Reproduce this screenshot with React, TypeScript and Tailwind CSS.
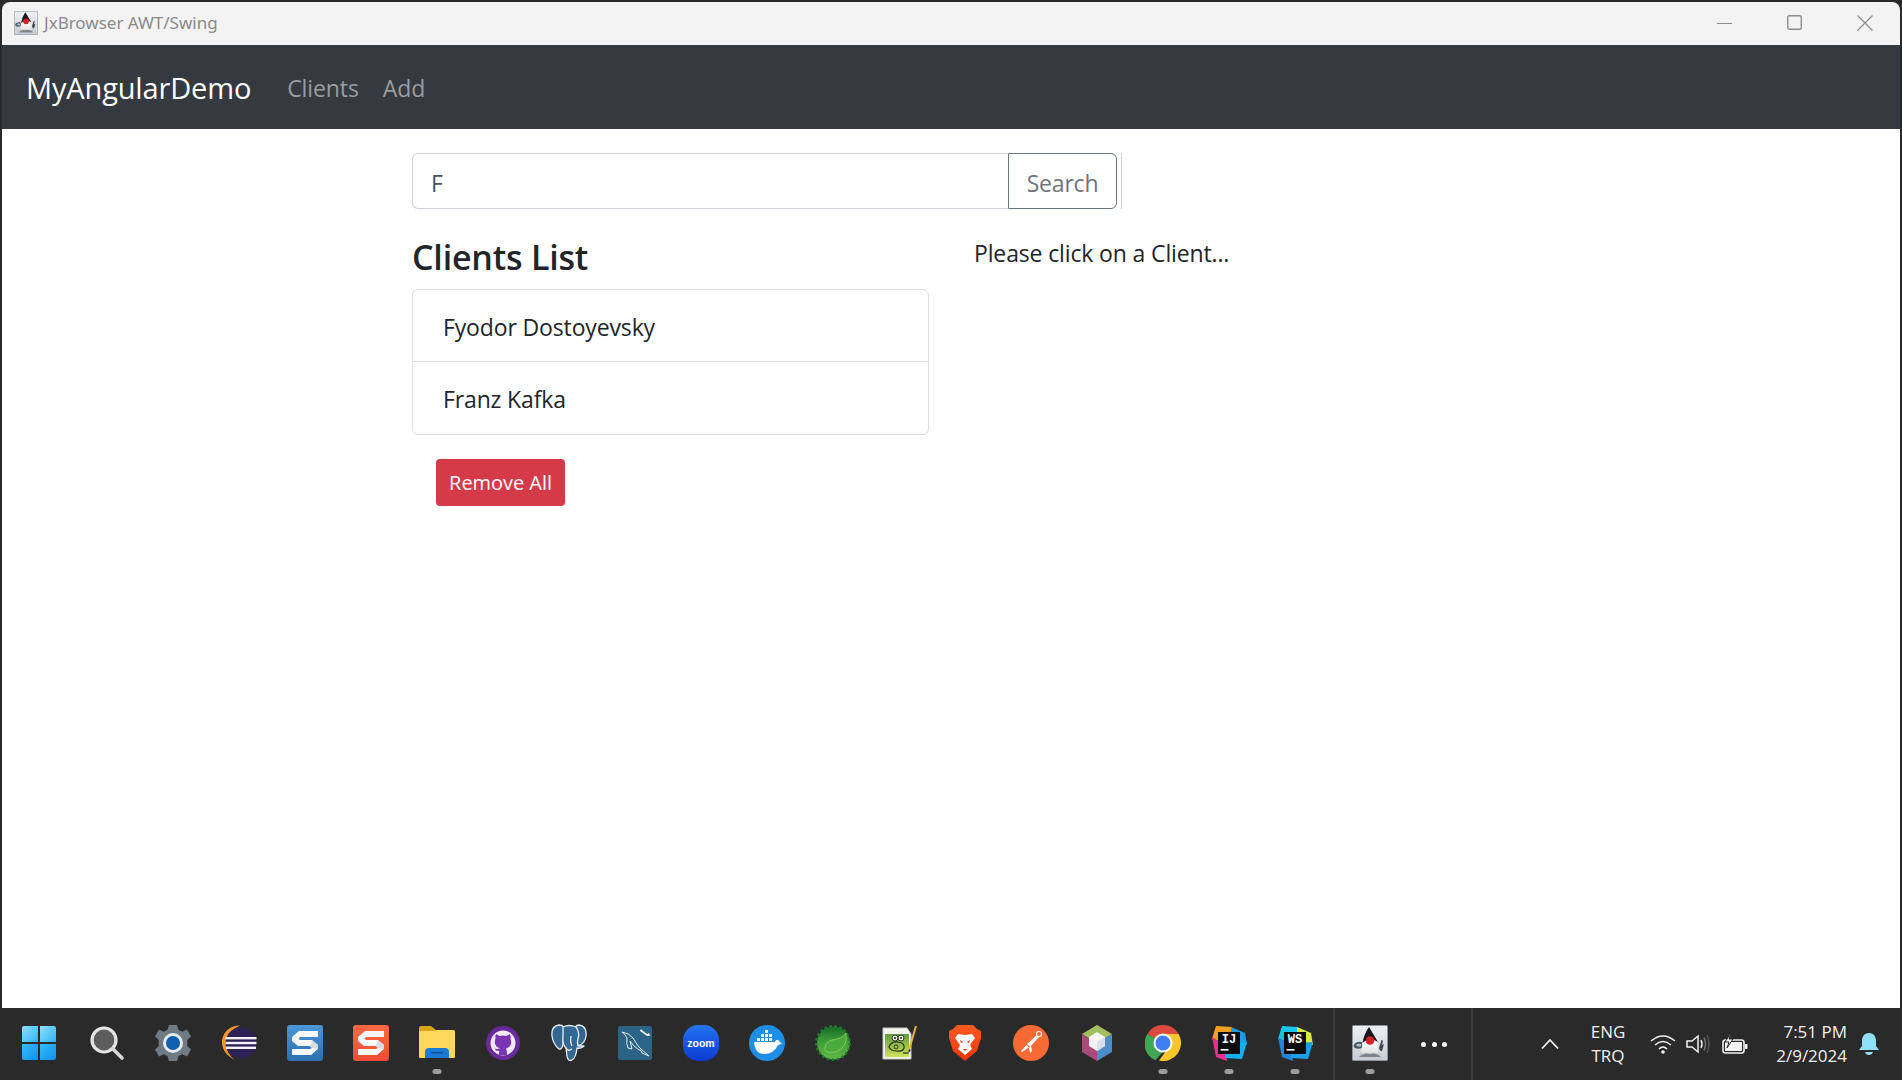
import React from "react";

const F = "font-['Open_Sans','Noto_Sans',sans-serif]";

const Duke = ({ s, id }: { s: number; id: string }) => (
  <svg width={s} height={s} viewBox="0 0 36 36">
    <defs>
      <linearGradient id={id} x1="0" y1="0" x2="0" y2="1">
        <stop offset="0" stopColor="#eef1f4" />
        <stop offset="1" stopColor="#c8ccd2" />
      </linearGradient>
      <linearGradient id={`${id}b`} x1="0" y1="0" x2="0" y2="1">
        <stop offset="0" stopColor="#ffffff" />
        <stop offset=".7" stopColor="#e4e4e4" />
        <stop offset="1" stopColor="#8d9198" />
      </linearGradient>
    </defs>
    <rect x=".5" y=".5" width="35" height="35" rx="1" fill={`url(#${id})`} stroke="#8a95a3" />
    <path d="M11 17 Q10 24 9 28 Q8 31 7 32 L29 32 Q27 30 26.500 27 Q26 22 25 16Z" fill={`url(#${id}b)`} />
    <path d="M17 2 L26 17 Q18 11 10.500 18 Q12 9 17 2Z" fill="#17171c" />
    <circle cx="18" cy="15.500" r="4.300" fill="#d61f2b" />
    <path d="M10 17 Q3 16 1.500 21 Q3 25 10 23Z" fill="#4a5866" />
    <path d="M4 20 Q5 18 9 19 L9 21.500 Q5 22 4 20Z" fill="#b6c2cd" />
    <path d="M27 23 L29.500 15 L31 15.500 L30 20 L32 19 L30 26 Q28 27 27 23Z" fill="#3f464f" />
    <path d="M8 32 Q12 27 18 29 Q24 27 28 32Z" fill="#7f848b" />
  </svg>
);

const Win = () => (
  <svg width="36" height="36" viewBox="0 0 36 36">
    <defs>
      <linearGradient id="w1" x1="0" y1="0" x2="1" y2="1"><stop offset="0" stopColor="#8fe0ff" /><stop offset="1" stopColor="#2cb4f5" /></linearGradient>
      <linearGradient id="w2" x1="0" y1="0" x2="1" y2="1"><stop offset="0" stopColor="#35bdf8" /><stop offset="1" stopColor="#0f8fee" /></linearGradient>
    </defs>
    <path d="M1 3a2 2 0 0 1 2-2h14v16H1z" fill="url(#w1)" />
    <path d="M19 1h14a2 2 0 0 1 2 2v14H19z" fill="url(#w1)" />
    <path d="M1 19h16v16H3a2 2 0 0 1-2-2z" fill="url(#w2)" />
    <path d="M19 19h16v14a2 2 0 0 1-2 2H19z" fill="url(#w2)" />
  </svg>
);

const SearchI = () => (
  <svg width="36" height="36" viewBox="0 0 36 36">
    <circle cx="15" cy="15" r="12" fill="#5c5c5c" stroke="#e4e4e4" strokeWidth="3.2" />
    <path d="M24 24 L33 33" stroke="#d8d8d8" strokeWidth="3.6" strokeLinecap="round" />
  </svg>
);

const Gear = () => (
  <svg width="38" height="38" viewBox="0 0 38 38">
    <path
      d="M15 1h8l1.500 5 3.800 1.800L33 5.500l4 7-3.700 3.400v6.200l3.700 3.400-4 7-4.700-2.300-3.800 1.800L23 37h-8l-1.500-5-3.800-1.800L5 32.500l-4-7 3.700-3.400v-6.200L1 12.500l4-7 4.700 2.300L13.500 6z"
      fill="#6f7a85"
    />
    <circle cx="19" cy="19" r="10" fill="#e6edf2" />
    <circle cx="19" cy="19" r="7" fill="#0f5fb0" />
  </svg>
);

const Eclipse = () => (
  <svg width="36" height="36" viewBox="0 0 36 36">
    <path d="M19 0.500 Q4 1 1 15 Q0 28 14 35 Q6 30 5 18 Q6 6 19 0.500Z" fill="#f5962c" />
    <circle cx="20" cy="18" r="15.500" fill="#2c2255" />
    <rect x="4.500" y="12" width="31" height="2.400" fill="#f4f2fa" />
    <rect x="4.500" y="16.800" width="31" height="2.400" fill="#f4f2fa" />
    <rect x="5" y="21.600" width="30" height="2.400" fill="#f4f2fa" />
  </svg>
);

const Snag = ({ a, b, id }: { a: string; b: string; id: string }) => (
  <svg width="36" height="36" viewBox="0 0 36 36">
    <defs>
      <linearGradient id={id} x1="0" y1="0" x2="0" y2="1"><stop offset="0" stopColor={b} /><stop offset="1" stopColor={a} /></linearGradient>
    </defs>
    <rect width="36" height="36" rx="3" fill={`url(#${id})`} />
    <path d="M31 6 H12 L5 12 V16 L11 21 H23 L25 23 L23 24 H5 V30 H24 L31 24 V20 L25 15 H13 L11.500 13.500 L13 12 H31Z" fill="#f6f8fa" />
    <path d="M25 15 L31 20 V24 L25 23 L23 21Z" fill="#d5dde4" />
  </svg>
);

const Folder = () => (
  <svg width="36" height="36" viewBox="0 0 36 36">
    <path d="M0 3a2 2 0 0 1 2-2h10l5 4h17a2 2 0 0 1 2 2v4H0z" fill="#d7a514" />
    <path d="M0 6h15l4-1h15a2 2 0 0 1 2 2v25a1 1 0 0 1-1 1H1a1 1 0 0 1-1-1z" fill="#ffd75a" />
    <path d="M6 33V27a4 4 0 0 1 4-4h16a4 4 0 0 1 4 4v6z" fill="#1d7ad2" />
    <rect x="12" y="27" width="12" height="1.500" fill="#0c4f95" />
  </svg>
);

const GitHub = () => (
  <svg width="34" height="34" viewBox="0 0 34 34">
    <circle cx="17" cy="17" r="17" fill="#6a2a9c" />
    <circle cx="17" cy="17" r="12.500" fill="#f1e8f8" />
    <path d="M10 8 L13.500 10 Q17 9 20.500 10 L24 8 Q25 11 24.500 13 Q26 16 24.500 19 Q23 22 20 22.500 Q21 24 21 29 L13 29 Q13 26 13.300 25 Q10 25.500 8.500 22.500 Q11 23.500 13.800 22.300 Q10.500 21.500 9.500 19 Q8 16 9.500 13 Q9 11 10 8Z" fill="#7b35b4" />
  </svg>
);

const Pg = () => (
  <svg width="36" height="38" viewBox="0 0 36 38" fill="#336791" stroke="#e8eef3" strokeWidth="1.300" strokeLinejoin="round">
    <path d="M8 1 Q0 2 1 12 Q2 20 8 25 Q11 26 12 20 L13 3 Q11 1 8 1Z" />
    <path d="M28 1 Q36 2 35 12 Q34 19 29 21 Q26 22 25 19 L24 3 Q26 1 28 1Z" />
    <path d="M12 3 Q18 0 25 3 Q29 8 27 15 Q26 19 27 22 L33 22 Q30 25 26 24 Q25 34 21 36 Q17 38 16 32 L15 24 Q11 20 12 12Z" />
    <path d="M15 24 Q17 28 21 25" fill="none" />
    <path d="M20 12 Q19 18 21 22" fill="none" />
  </svg>
);

const Mysql = () => (
  <svg width="34" height="34" viewBox="0 0 34 34">
    <rect width="34" height="34" rx="2" fill="#2c6488" />
    <path d="M4 6 Q11 7 15 12 Q18 17 21 21 Q25 25 31 30 L24 27 Q23 23 21 24 Q15 20 12 15 L14 23 L10 22 Q8 18 9 12 Q7 8 4 6Z" fill="none" stroke="#e3edf4" strokeWidth="1" strokeLinejoin="round" />
    <path d="M23 3 L25 5 L29 8 L31 7 L32 10 L29 10 L25 7 L22 5Z" fill="#f0f4f7" />
  </svg>
);

const Zoom = () => (
  <svg width="36" height="36" viewBox="0 0 36 36">
    <defs>
      <linearGradient id="zm" x1="0" y1="0" x2="0" y2="1"><stop offset="0" stopColor="#2573f2" /><stop offset="1" stopColor="#0b3ad0" /></linearGradient>
    </defs>
    <rect width="36" height="36" rx="15" fill="url(#zm)" />
    <text x="18" y="21.500" textAnchor="middle" fontSize="10.500" fontWeight="700" fill="#fff" fontFamily="Liberation Sans, sans-serif">zoom</text>
  </svg>
);

const Docker = () => (
  <svg width="36" height="36" viewBox="0 0 36 36">
    <circle cx="18" cy="18" r="18" fill="#1f8fe6" />
    <path d="M5 17 H26 Q27 14 29 15 Q31 16 31 17.500 Q33 17.500 33 18 Q31 20 29 20 Q25 29 15 29 Q6 29 5 17Z" fill="#fff" />
    <g fill="#fff">
      <rect x="8" y="13" width="3" height="3" /><rect x="12" y="13" width="3" height="3" /><rect x="16" y="13" width="3" height="3" /><rect x="20" y="13" width="3" height="3" />
      <rect x="12" y="9" width="3" height="3" /><rect x="16" y="9" width="3" height="3" /><rect x="20" y="9" width="3" height="3" /><rect x="16" y="5" width="3" height="3" />
    </g>
  </svg>
);

const Spring = () => (
  <svg width="36" height="36" viewBox="0 0 36 36">
    <defs>
      <linearGradient id="sp" x1="0" y1="0" x2="0" y2="1"><stop offset="0" stopColor="#176a2a" /><stop offset=".45" stopColor="#3f9f38" /><stop offset="1" stopColor="#5fb847" /></linearGradient>
    </defs>
    <circle cx="18.500" cy="18" r="16.500" fill="url(#sp)" />
    <circle cx="18" cy="18" r="16.800" fill="none" stroke="#1f7a2e" strokeWidth="2.400" strokeDasharray="2.500 2.500" />
    <path d="M31 8 Q33 21 23 26 Q15 29 10 25.500 Q9 17 17 15 Q27 14 31 8Z" fill="#4aaa3c" stroke="#8ed268" strokeWidth=".8" />
  </svg>
);

const Npp = () => (
  <svg width="36" height="36" viewBox="0 0 36 36">
    <defs>
      <linearGradient id="np" x1="0" y1="0" x2="0" y2="1"><stop offset="0" stopColor="#5f9e3c" /><stop offset="1" stopColor="#d2e05a" /></linearGradient>
    </defs>
    <path d="M2 3 H26 L30 9 V34 H2Z" fill="#f5f7ef" stroke="#c5c9c1" />
    <path d="M4 9 H28 V32 H4Z" fill="url(#np)" />
    <circle cx="14" cy="13" r="3" fill="#eef2e0" stroke="#2e3a1a" />
    <circle cx="20" cy="13" r="3" fill="#eef2e0" stroke="#2e3a1a" />
    <circle cx="14" cy="13" r="1" fill="#222" /><circle cx="20" cy="13" r="1" fill="#222" />
    <path d="M8 22 Q10 16 17 17 Q24 18 23 23 Q22 27 15 26 Q10 26 8 22Z" fill="none" stroke="#2e3a1a" strokeWidth="1.200" />
    <circle cx="15" cy="22" r="2" fill="none" stroke="#2e3a1a" />
    <path d="M22 28 H27" stroke="#2e3a1a" strokeWidth="1.200" />
    <path d="M28 25 L35 1" stroke="#e4b43c" strokeWidth="2" />
    <path d="M27 29 L28 24 L30 25Z" fill="#333" />
  </svg>
);

const Brave = () => (
  <svg width="34" height="36" viewBox="0 0 34 36">
    <defs>
      <linearGradient id="br" x1="0" y1="0" x2="0" y2="1"><stop offset="0" stopColor="#ff5a1f" /><stop offset="1" stopColor="#f2350a" /></linearGradient>
    </defs>
    <path d="M9 0 H25 L29 4 L33 6 L33 13 L29 26 L17 36 L5 26 L1 13 L1 6 L5 4Z" fill="url(#br)" />
    <path d="M10 9 L17 10 L24 9 L27 13 L22 20 L24 24 L17 30 L10 24 L12 20 L7 13Z" fill="#fff" />
    <path d="M12 15 L15 17 L13 18Z M22 15 L19 17 L21 18Z M15 24 H19 L17 26Z" fill="#f2350a" />
  </svg>
);

const Postman = () => (
  <svg width="36" height="36" viewBox="0 0 36 36">
    <circle cx="18" cy="18" r="18" fill="#f76935" />
    <circle cx="26" cy="9" r="2.500" fill="none" stroke="#fff" strokeWidth="1.200" />
    <path d="M24 10 L26 12 L17 22 L14 19Z" fill="#fff" />
    <path d="M13.500 20 L16 22.500 L9 27 L8 26Z" fill="#fff" />
    <path d="M16 23 L17 28 L19 26 L18 21Z" fill="#fff" />
  </svg>
);

const Nb = () => (
  <svg width="34" height="36" viewBox="0 0 34 36">
    <path d="M17 0 L32 9 L17 18 L2 9Z" fill="#a6bf5e" />
    <path d="M2 9 L17 18 V36 L2 27Z" fill="#a94a78" />
    <path d="M32 9 L17 18 V36 L32 27Z" fill="#4d8ec9" />
    <path d="M17 7 L25 12 V21 L17 26 L9 21 V12Z" fill="#f4f5f4" />
    <path d="M17 17 L25 12 V21 L17 26Z" fill="#d7dfe6" />
  </svg>
);

const Chrome = () => (
  <svg width="36" height="36" viewBox="0 0 36 36">
    <path d="M18 0 A18 18 0 0 1 33.600 9 H18 A9 9 0 0 0 10.200 13.500 L2.400 9 A18 18 0 0 1 18 0Z" fill="#dd4a3d" />
    <path d="M2.400 9 L10.200 13.500 A9 9 0 0 0 18 27 L10.200 35.200 A18 18 0 0 1 2.400 9Z" fill="#3fa854" />
    <path d="M33.600 9 A18 18 0 0 1 14 35.600 L21 26 A9 9 0 0 0 25.800 13.500 L18 9Z" fill="#fbc52c" />
    <circle cx="18" cy="18" r="9.500" fill="#fff" />
    <circle cx="18" cy="18" r="7.500" fill="#3f7ff0" />
  </svg>
);

const Jb = ({ l, c1, c2, c3, c4 }: { l: string; c1: string; c2: string; c3: string; c4: string }) => (
  <svg width="36" height="36" viewBox="0 0 36 36">
    <path d="M5 1 L21 2 L18 18 L1 14Z" fill={c1} />
    <path d="M20 2 L34 8 L36 20 L20 16Z" fill={c2} />
    <path d="M1 12 L14 20 L16 36 L5 32Z" fill={c3} />
    <path d="M16 18 L36 17 L31 34 L14 33Z" fill={c4} />
    <rect x="7" y="7" width="22" height="22" fill="#0b0b0d" />
    <text x="18" y="18" textAnchor="middle" fontSize="12" fontWeight="700" fill="#fff" fontFamily="Liberation Mono, monospace">{l}</text>
    <rect x="9.500" y="24" width="8" height="1.600" fill="#fff" />
  </svg>
);

type Ic = { n: React.ReactNode; dot?: boolean };
const apps: Ic[] = [
  { n: <span className="-ml-[4px]"><Win /></span> },
  { n: <SearchI /> },
  { n: <Gear /> },
  { n: <Eclipse /> },
  { n: <Snag a="#2d6fb0" b="#4b97d8" id="s1" /> },
  { n: <Snag a="#ef4b35" b="#ff6a45" id="s2" /> },
  { n: <Folder />, dot: true },
  { n: <GitHub /> },
  { n: <Pg /> },
  { n: <Mysql /> },
  { n: <Zoom /> },
  { n: <Docker /> },
  { n: <Spring /> },
  { n: <Npp /> },
  { n: <Brave /> },
  { n: <Postman /> },
  { n: <Nb /> },
  { n: <Chrome />, dot: true },
  { n: <Jb l="IJ" c1="#f9a01b" c2="#1d9be6" c3="#e8308f" c4="#14b0ee" />, dot: true },
  { n: <Jb l="WS" c1="#18c4e8" c2="#d7e84a" c3="#1f86dd" c4="#1c9fe8" />, dot: true },
];

const Slot = ({ n, dot }: Ic) => (
  <div className="relative flex h-[72px] w-[66px] items-center justify-center pb-[2px]">
    {n}
    {dot && <span className="absolute bottom-[6px] left-1/2 h-[5px] w-[9px] -translate-x-1/2 rounded-full bg-[#9d9d9d]" />}
  </div>
);

export default function App() {
  return (
    <div className={`flex h-[1080px] w-[1902px] flex-col overflow-hidden bg-[#2a2a2a] ${F}`}>
      <div className="flex h-[1008px] flex-col px-[2px] pt-[2px]">
        <div className="flex h-[43px] shrink-0 items-center rounded-t-[8px] bg-[#f3f3f3] pb-[2px] pl-[12px]">
          <Duke s={24} id="d1" />
          <span className="ml-[6px] font-['Noto_Sans',sans-serif] text-[17px] text-[#8a8a8a]">JxBrowser AWT/Swing</span>
          <div className="ml-auto flex items-center text-[#8d8d8d]">
            <svg width="16" height="16" viewBox="0 0 16 16" className="mr-[54px]"><path d="M0 8.500H15" stroke="currentColor" strokeWidth="1" /></svg>
            <svg width="15" height="15" viewBox="0 0 15 15" className="mr-[55px]"><rect x=".75" y=".75" width="13.500" height="13.500" rx="1.500" fill="none" stroke="currentColor" strokeWidth="1.400" /></svg>
            <svg width="16" height="16" viewBox="0 0 16 16" className="mr-[27px]"><path d="M.5.5 15.500 15.500M15.500.5.5 15.500" stroke="currentColor" strokeWidth="1.200" /></svg>
          </div>
        </div>
        <nav className="flex h-[84px] shrink-0 items-center bg-[#343a40] pl-[24px] pt-[2px]">
          <span className="text-[29px] tracking-[-0.15px] text-white">MyAngularDemo</span>
          <span className="ml-[36px] pt-[1px] text-[23px] tracking-[-0.1px] text-[#9a9da0]">Clients</span>
          <span className="ml-[24px] pt-[1px] text-[23px] tracking-[-0.1px] text-[#9a9da0]">Add</span>
        </nav>
        <main className="flex-1 bg-white pl-[410px] pt-[24px]">
          <div className="flex h-[56px] w-[710px] border-r border-[#cfcfcf] pr-[4px]">
            <div className="flex flex-1 items-center rounded-l-[6px] border border-r-0 border-[#ced4da] pl-[18px] pt-[5px] text-[23px] text-[#495057]">F</div>
            <div className="flex w-[109px] items-center justify-center rounded-[6px] rounded-l-none border border-[#6c757d] pt-[5px] text-[23px] tracking-[-0.2px] text-[#6c757d]">Search</div>
          </div>
          <div className="flex">
            <div className="w-[517px]">
              <h2 className="mt-[24px] text-[34px] leading-[48px] font-semibold tracking-[-0.2px] text-[#212529]">Clients List</h2>
              <ul className="mt-[8px] rounded-[6px] border border-[#dfdfdf] text-[23px] tracking-[-0.14px] text-[#212529]">
                <li className="flex h-[72px] items-center border-b border-[#dfdfdf] pl-[30px] pt-[3px]">Fyodor Dostoyevsky</li>
                <li className="flex h-[72px] items-center pl-[30px] pt-[3px]">Franz Kafka</li>
              </ul>
              <button className="ml-[24px] mt-[24px] flex h-[47px] w-[129px] items-center justify-center rounded-[4px] bg-[#d53a49] text-[20px] tracking-[-0.05px] text-white">Remove All</button>
            </div>
            <p className="ml-[45px] mt-[26px] text-[23px] leading-[36px] tracking-[-0.14px] text-[#212529]">Please click on a Client...</p>
          </div>
        </main>
      </div>
      <footer className="flex h-[72px] items-center pl-[8px] text-[#f0f0f0]">
        {apps.map((a, i) => <Slot key={i} {...a} />)}
        <div className="ml-[5px] h-full w-[2px] bg-[#3d3d3d]" />
        <div className="ml-[2px]"><Slot n={<Duke s={36} id="d2" />} dot /></div>
        <div className="ml-[18px] flex w-[26px] justify-between">
          <span className="h-[5px] w-[5px] rounded-full bg-white" /><span className="h-[5px] w-[5px] rounded-full bg-white" /><span className="h-[5px] w-[5px] rounded-full bg-white" />
        </div>
        <div className="ml-[24px] h-full w-[2px] bg-[#3d3d3d]" />
        <svg width="18" height="12" viewBox="0 0 18 12" className="ml-[68px]"><path d="M1 10.500 9 2l8 8.500" fill="none" stroke="#f2f2f2" strokeWidth="1.800" /></svg>
        <div className="ml-[31px] w-[36px] text-center text-[17px] leading-[24px]">ENG<br />TRQ</div>
        <svg width="26" height="20" viewBox="0 0 26 20" className="ml-[24px]" fill="none" stroke="#f2f2f2" strokeWidth="1.600"><path d="M1 7Q13-3 25 7M5 11Q13 4 21 11M9 15Q13 11 17 15" /><circle cx="13" cy="18" r="1.800" fill="#f2f2f2" stroke="none" /></svg>
        <svg width="24" height="20" viewBox="0 0 24 20" className="ml-[10px]" fill="none" stroke="#f2f2f2" strokeWidth="1.500"><path d="M1 7H6L12 2V18L6 13H1Z" /><path d="M15 6Q17 10 15 14" /><path d="M18 3.500Q21 10 18 16.500" stroke="#777" /><path d="M21 1Q25 10 21 19" stroke="#555" /></svg>
        <svg width="26" height="22" viewBox="0 0 26 22" className="ml-[12px]" fill="none"><rect x="1" y="7" width="21" height="13" rx="2.500" stroke="#f2f2f2" strokeWidth="1.600" /><rect x="3" y="9" width="17" height="9" fill="#f2f2f2" /><rect x="23" y="11" width="2.500" height="5" fill="#f2f2f2" /><path d="M9 0 L3 9 H7 L5 15 L11 6 H7Z" fill="#f2f2f2" stroke="#2a2a2a" /></svg>
        <div className="ml-[27px] w-[72px] whitespace-nowrap text-right text-[17px] leading-[24px]"><div>7:51 PM</div><div>2/9/2024</div></div>
        <svg width="22" height="24" viewBox="0 0 22 24" className="ml-[11px]"><path d="M11 1C6 1 4 5 4 9V14L1 18H21L18 14V9C18 5 16 1 11 1Z" fill="#8fe0f8" /><path d="M7 20H15Q14 23 11 23 8 23 7 20Z" fill="#8fe0f8" /></svg>
      </footer>
    </div>
  );
}
